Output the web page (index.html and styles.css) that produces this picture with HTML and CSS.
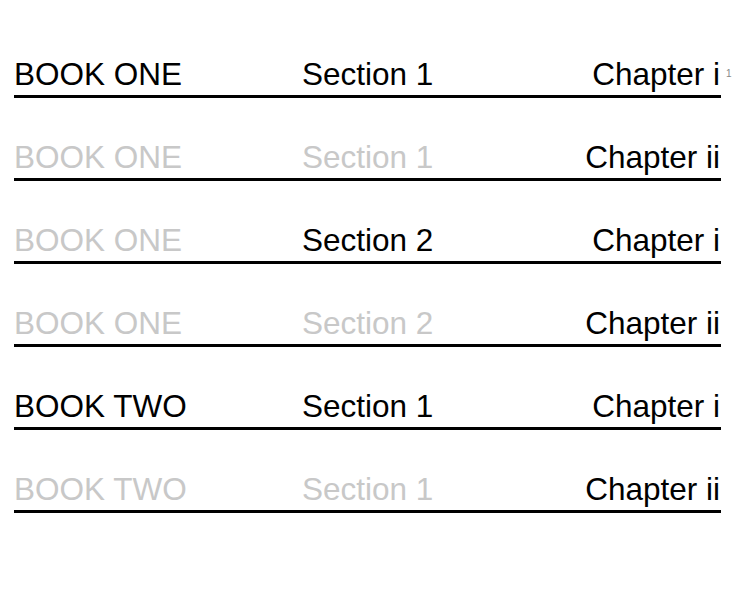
FILE: index.html
```html
<!DOCTYPE html>
<html>
<head>
<meta charset="utf-8">
<link rel="stylesheet" href="styles.css">
</head>
<body>
<div class="list">
  <div class="row"><span class="book">BOOK ONE</span><span class="section">Section 1</span><span class="chapter">Chapter i<sup class="note">1</sup></span></div>
  <div class="row"><span class="book dim">BOOK ONE</span><span class="section dim">Section 1</span><span class="chapter">Chapter ii</span></div>
  <div class="row"><span class="book dim">BOOK ONE</span><span class="section">Section 2</span><span class="chapter">Chapter i</span></div>
  <div class="row"><span class="book dim">BOOK ONE</span><span class="section dim">Section 2</span><span class="chapter">Chapter ii</span></div>
  <div class="row"><span class="book">BOOK TWO</span><span class="section">Section 1</span><span class="chapter">Chapter i</span></div>
  <div class="row"><span class="book dim">BOOK TWO</span><span class="section dim">Section 1</span><span class="chapter">Chapter ii</span></div>
</div>
</body>
</html>
```

FILE: styles.css
```css
html, body {
  margin: 0;
  background: #fff;
}
.list {
  padding: 15px 15px 0 14px;
  font-family: "Liberation Sans", Arial, sans-serif;
  font-size: 31.5px;
  line-height: 29px;
  color: #000;
}
.row {
  display: grid;
  grid-template-columns: 288px 1fr auto;
  align-items: end;
  height: 80px;
  border-bottom: 3px solid #000;
}
.row > span {
  padding-bottom: 6px;
}
.chapter {
  text-align: right;
  position: relative;
  padding-right: 1px;
}
.dim {
  color: #c8c8c8;
}
.note {
  position: absolute;
  left: 100%;
  margin-left: 5px;
  top: 9px;
  font-size: 10px;
  line-height: 10px;
  color: #888;
}
```
